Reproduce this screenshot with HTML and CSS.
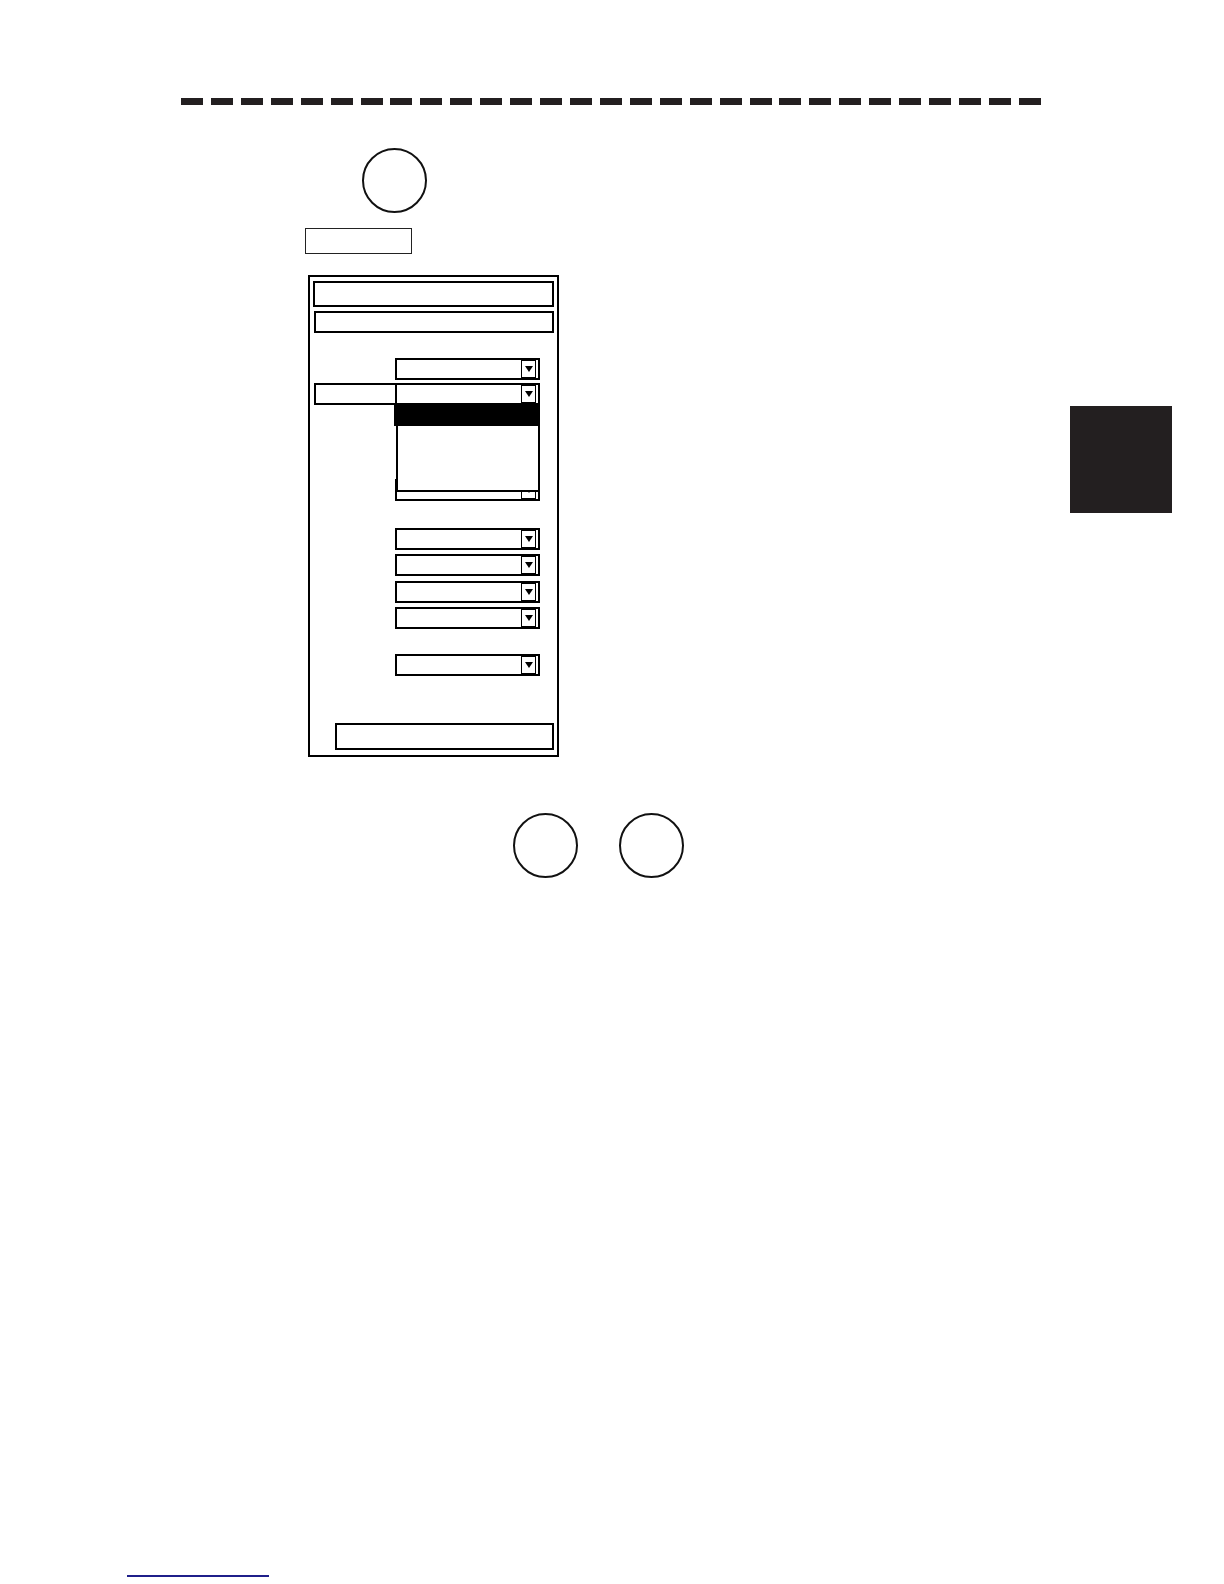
FILE: index.html
```html
<!DOCTYPE html>
<html lang="en">
<head>
<meta charset="utf-8">
<title>Menu procedure</title>
<link rel="stylesheet" href="styles.css">
</head>
<body>
<div class="page">
  <div class="rule">
    <span></span><span></span><span></span><span></span><span></span><span></span><span></span><span></span><span></span><span></span>
    <span></span><span></span><span></span><span></span><span></span><span></span><span></span><span></span><span></span><span></span>
    <span></span><span></span><span></span><span></span><span></span><span></span><span></span><span></span><span></span>
  </div>

  <div class="key key-top"></div>
  <div class="softkey"></div>

  <div class="main-row">
    <div class="panel">
      <div class="title-box"></div>
      <div class="sub-box"></div>

      <div class="row r1"><div class="label"></div><div class="dd"><span class="btn"><i class="tri"></i></span></div></div>
      <div class="row r2">
        <div class="label boxed"></div>
        <div class="dd open"><span class="btn"><i class="tri"></i></span>
          <div class="list"><div class="sel"></div></div>
        </div>
      </div>
      <div class="row r3"><div class="label"></div><div class="dd"><span class="btn"><i class="tri"></i></span></div></div>
      <div class="row r4"><div class="label"></div><div class="dd"><span class="btn"><i class="tri"></i></span></div></div>
      <div class="row r5"><div class="label"></div><div class="dd"><span class="btn"><i class="tri"></i></span></div></div>
      <div class="row r6"><div class="label"></div><div class="dd"><span class="btn"><i class="tri"></i></span></div></div>
      <div class="row r7"><div class="label"></div><div class="dd"><span class="btn"><i class="tri"></i></span></div></div>
      <div class="row r8"><div class="label"></div><div class="dd"><span class="btn"><i class="tri"></i></span></div></div>

      <div class="wide-btn"></div>
    </div>
    <div class="tab"></div>
  </div>

  <div class="key-row">
    <div class="key"></div>
    <div class="key"></div>
  </div>

  <div class="footer-line"></div>
</div>
</body>
</html>
```

FILE: styles.css
```css
* { box-sizing: border-box; }

html, body {
  margin: 0;
  padding: 0;
  background: #ffffff;
  font-family: "Liberation Sans", Arial, sans-serif;
}

.page {
  width: 1224px;
  height: 1584px;
  overflow: hidden;
}

.rule {
  display: flex;
  justify-content: space-between;
  width: 860px;
  height: 7px;
  margin: 98px 0 0 181px;
}
.rule span {
  width: 22px;
  height: 7px;
  background: #231f20;
}

.key {
  width: 65px;
  height: 65px;
  border: 2px solid #111;
  border-radius: 50%;
}
.key-top {
  margin: 43px 0 0 362px;
}

.softkey {
  width: 107px;
  height: 26px;
  margin: 15px 0 0 305px;
  border: 1.5px solid #222;
}

.main-row {
  display: flex;
  align-items: flex-start;
  margin-top: 21px;
}

.panel {
  width: 251px;
  height: 482px;
  margin-left: 308px;
  border: 2px solid #000;
}

.tab {
  width: 102px;
  height: 107px;
  margin: 131px 52px 0 auto;
  background: #231f20;
}

.title-box {
  width: 241px;
  height: 26px;
  margin: 4px 0 0 3px;
  border: 2px solid #000;
}
.sub-box {
  width: 240px;
  height: 22px;
  margin: 4px 0 0 4px;
  border: 2px solid #000;
}

.row {
  display: flex;
  height: 22px;
  margin-left: 4px;
}
.r1 { margin-top: 25px; }
.r2 { margin-top: 3px; }
.r3 { margin-top: 74px; }
.r4 { margin-top: 27px; }
.r5 { margin-top: 4px; }
.r6 { margin-top: 5px; }
.r7 { margin-top: 4px; }
.r8 { margin-top: 25px; }

.label {
  width: 81px;
  height: 22px;
}
.label.boxed {
  width: 82px;
  margin-right: -1px;
  border: 2px solid #000;
  border-right: none;
}

.dd {
  position: relative;
  width: 145px;
  height: 22px;
  border: 2px solid #000;
  display: flex;
  justify-content: flex-end;
  align-items: center;
  padding-right: 2px;
  background: #fff;
}

.btn {
  display: flex;
  justify-content: center;
  align-items: center;
  width: 15px;
  height: 18px;
  border: 1.5px solid #000;
}
.tri {
  display: block;
  width: 0;
  height: 0;
  border-left: 4.5px solid transparent;
  border-right: 4.5px solid transparent;
  border-top: 6px solid #000;
}

.list {
  position: absolute;
  z-index: 2;
  top: 19px;
  left: -1px;
  width: 144px;
  height: 88px;
  background: #fff;
  border: 2px solid #000;
  border-top: none;
}
.list .sel {
  height: 22px;
  margin: 0 -2px 0 -4px;
  background: #000;
}

.wide-btn {
  width: 219px;
  height: 27px;
  margin: 47px 0 0 25px;
  border: 2px solid #000;
}

.key-row {
  display: flex;
  gap: 41px;
  margin: 56px 0 0 513px;
}

.footer-line {
  width: 142px;
  height: 2px;
  margin: 697px 0 0 127px;
  background: #1f1f8a;
}
```
